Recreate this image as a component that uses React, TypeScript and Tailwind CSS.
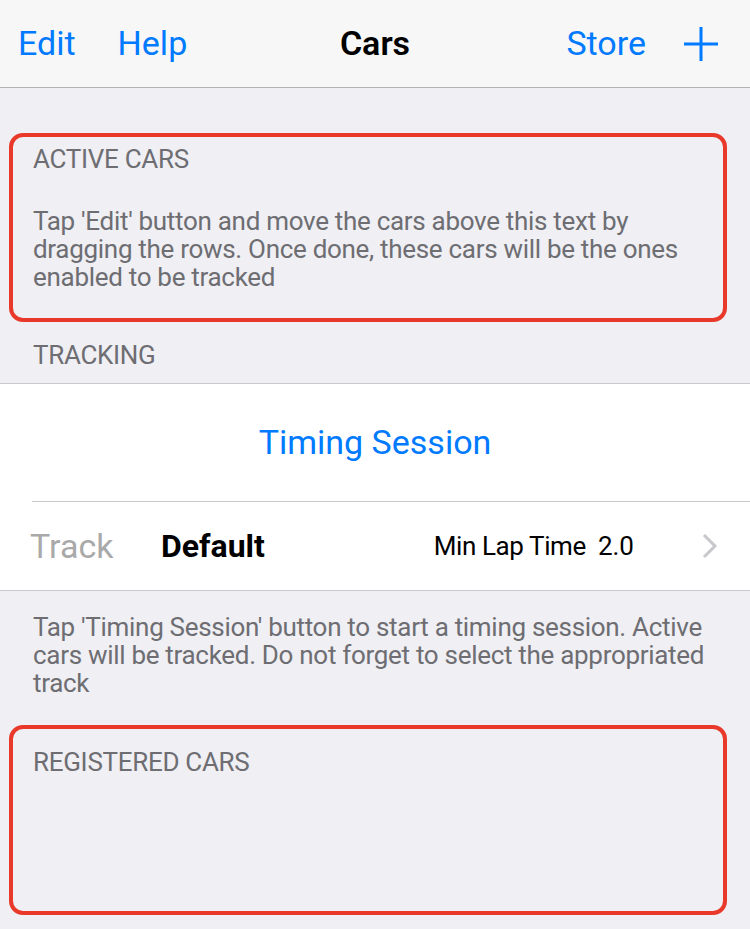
const font = { fontFamily: "Roboto, 'Liberation Sans', sans-serif" };

function SectionHeader({ children, className = "" }: { children: string; className?: string }) {
  return (
    <p className={`px-[33px] text-[26px] leading-[28px] tracking-[-0.3px] uppercase text-[#6d6d72] ${className}`}>
      {children}
    </p>
  );
}

function Footer({ children, className = "" }: { children: string; className?: string }) {
  return (
    <p className={`pl-[33px] pr-[20px] text-[26px] leading-[28px] tracking-[-0.3px] text-[#6d6d72] ${className}`}>
      {children}
    </p>
  );
}

export default function App() {
  return (
    <div className="relative h-[929px] w-[750px] overflow-hidden bg-[#efeff4]" style={font}>
      <header className="grid h-[88px] grid-cols-[1fr_auto_1fr] items-center border-b border-[#b2b2b2] bg-[#f7f7f7] px-[18px] text-[34px] text-[#007aff]">
        <div className="flex items-center gap-[42px]">
          <span>Edit</span>
          <span>Help</span>
        </div>
        <span className="font-semibold text-black">Cars</span>
        <div className="flex items-center justify-end gap-[38px] pr-[14px]">
          <span>Store</span>
          <svg className="h-[34px] w-[34px]" viewBox="0 0 34 34" fill="none">
            <path d="M17 0v34M0 17h34" stroke="#007aff" strokeWidth="3" />
          </svg>
        </div>
      </header>

      <SectionHeader className="mt-[57px]">Active cars</SectionHeader>
      <Footer className="mt-[34px]">
        Tap 'Edit' button and move the cars above this text by dragging the rows. Once done, these cars will be the ones enabled to be tracked
      </Footer>

      <SectionHeader className="mt-[50px]">Tracking</SectionHeader>
      <div className="mt-[14px] border-y border-[#c8c7cc] bg-white">
        <div className="ml-[32px] flex h-[118px] items-center justify-center border-b border-[#c8c7cc] pr-[32px] text-[34px] text-[#007aff]">
          Timing Session
        </div>
        <div className="flex h-[88px] items-center pl-[30px] pr-[32px]">
          <span className="w-[131px] text-[34px] text-[#a9a9a9]">Track</span>
          <span className="text-[32px] font-bold text-black">Default</span>
          <span className="ml-auto text-[26px] tracking-[-0.4px] text-black">Min Lap Time</span>
          <span className="ml-[12px] text-[26px] text-black">2.0</span>
          <svg className="ml-[68px] h-[26px] w-[16px]" viewBox="0 0 16 26" fill="none">
            <path d="M2 2l11 11L2 24" stroke="#c7c7cc" strokeWidth="3" />
          </svg>
        </div>
      </div>
      <Footer className="mt-[22px]">
        Tap 'Timing Session' button to start a timing session. Active cars will be tracked. Do not forget to select the appropriated track
      </Footer>

      <SectionHeader className="mt-[51px]">Registered cars</SectionHeader>

      <div className="absolute left-[9px] top-[133px] h-[189px] w-[718px] rounded-[14px] border-[4px] border-[#e8392a]" />
      <div className="absolute left-[9px] top-[725px] h-[190px] w-[718px] rounded-[14px] border-[4px] border-[#e8392a]" />
    </div>
  );
}
